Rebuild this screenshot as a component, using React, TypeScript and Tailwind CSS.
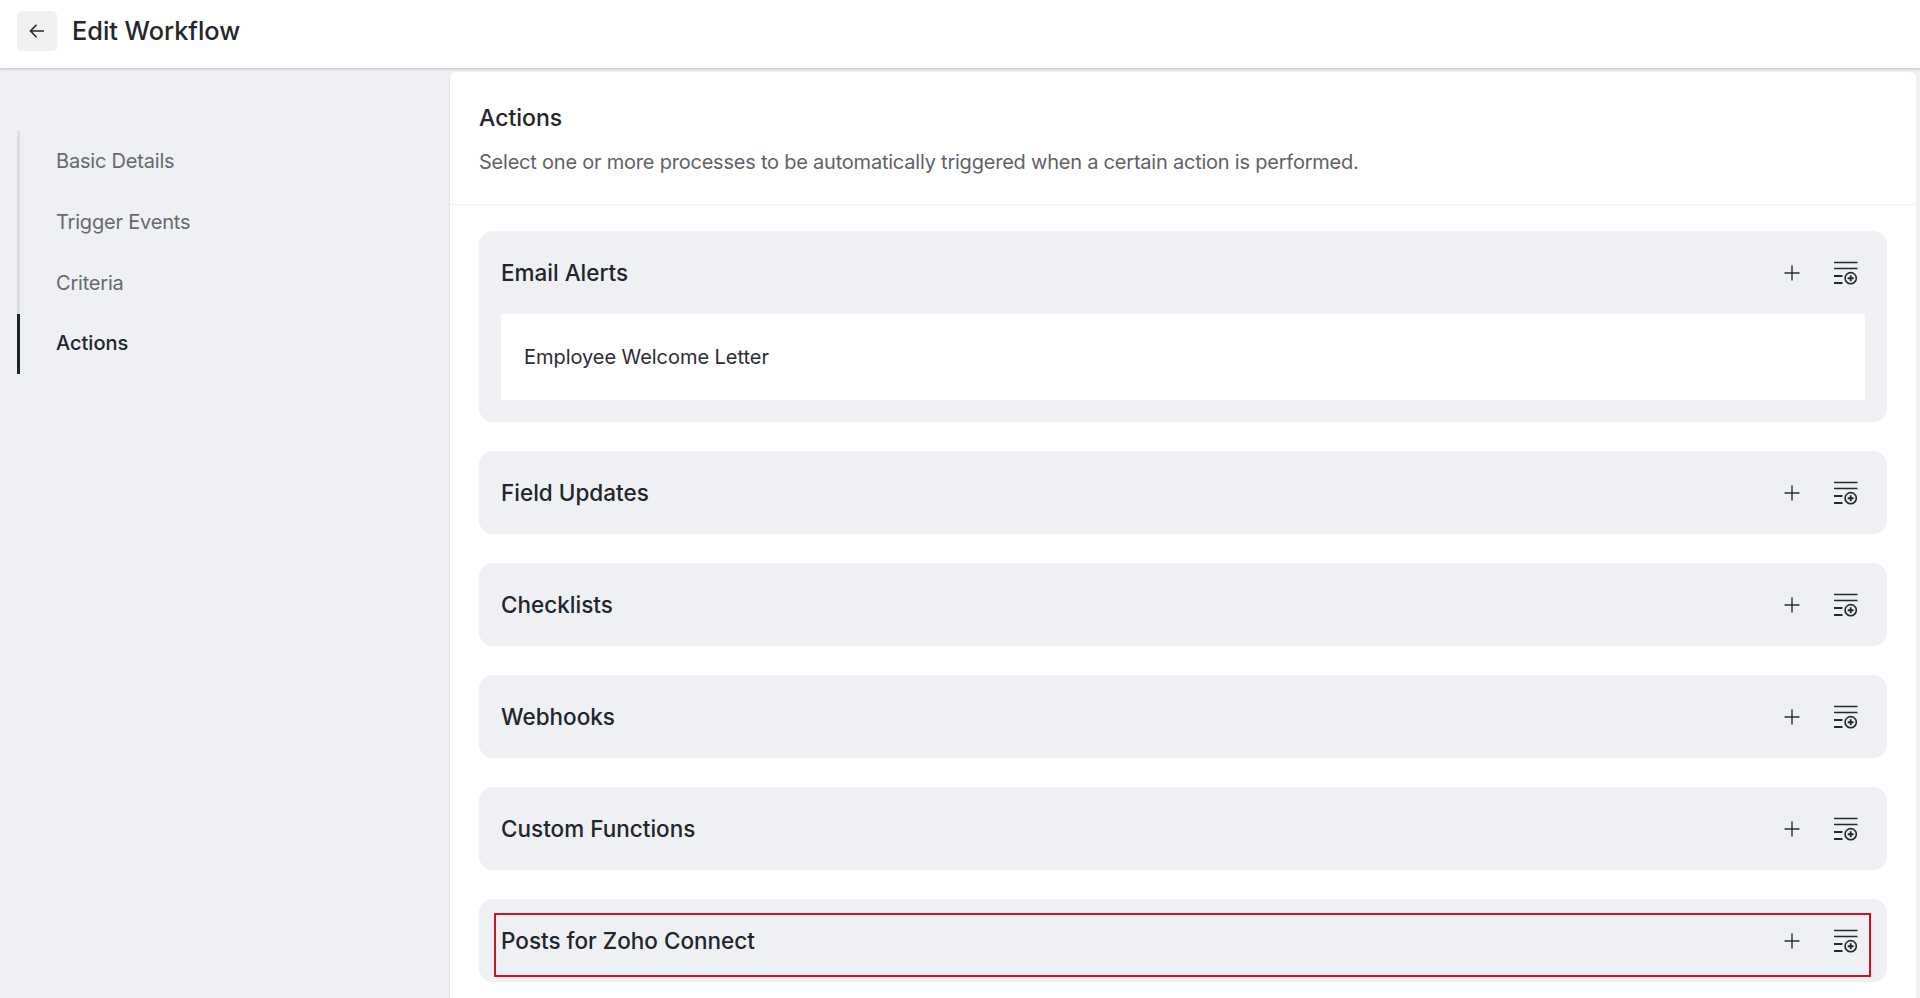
import React from 'react';

const font = { fontFamily: 'Inter, "Noto Sans", sans-serif' };

const ReorderIcon = () => (
  <svg width="24" height="24" viewBox="0 0 24 24" fill="none" stroke="#25282d" className="shrink-0">
    <path d="M0 1.5h23.5M0 7.5h23.5" strokeWidth="1.6" />
    <path d="M0 15h8.5M0 22h8.5" strokeWidth="1.8" />
    <circle cx="16.7" cy="17.2" r="5.6" strokeWidth="1.6" />
    <path d="M16.7 14.2v6M13.7 17.2h6" strokeWidth="1.9" />
  </svg>
);

const PlusIcon = () => (
  <svg width="16" height="16" viewBox="0 0 16 16" fill="none" stroke="#2a2d33" strokeWidth="1.4" className="shrink-0">
    <path d="M8 0.5v15M0.5 8h15" />
  </svg>
);

const ArrowLeft = () => (
  <svg width="16" height="16" viewBox="0 0 16 16" fill="none" stroke="#23262b" strokeWidth="1.6" className="shrink-0">
    <path d="M15 8H1.5M7.5 1.8 1.5 8l6 6.2" />
  </svg>
);

const CardHeader = ({ title }: { title: string }) => (
  <div className="flex h-[83px] items-center pl-[22px] pr-[29px]">
    <span className="flex-1 text-[22.5px] font-medium text-[#22252a]">{title}</span>
    <div className="mr-[34px]">
      <PlusIcon />
    </div>
    <ReorderIcon />
  </div>
);

const steps = ['Basic Details', 'Trigger Events', 'Criteria', 'Actions'];
const rows = ['Field Updates', 'Checklists', 'Webhooks', 'Custom Functions'];

export default function App() {
  return (
    <div className="flex h-[998px] flex-col overflow-hidden bg-[#eef0f4]" style={font}>
      {/* Top bar */}
      <header className="relative z-10 flex h-[68px] shrink-0 items-start bg-white pl-[17px] pt-[11px] shadow-[0_1px_3px_rgba(0,0,0,0.2)]">
        <button className="mr-[15px] flex h-[40px] w-[40px] items-center justify-center rounded-[5px] bg-[#f0f0f1]">
          <ArrowLeft />
        </button>
        <h1 className="text-[25.3px] font-medium leading-[40px] text-[#23262b]">Edit Workflow</h1>
      </header>

      <div className="flex min-h-0 flex-1">
        {/* Steps */}
        <nav className="w-[449px] shrink-0 pl-[17px] pt-[63px]">
          <ul className="border-l-[3px] border-[#dcdde0]">
            {steps.map((step) => {
              const active = step === 'Actions';
              return (
                <li
                  key={step}
                  className={
                    active
                      ? '-ml-[3px] flex h-[60px] items-center border-l-[3px] border-[#1f2227] pb-[2px] pl-[36px] text-[20px] font-medium text-[#22252a]'
                      : 'flex h-[61px] items-center pb-[2px] pl-[36px] text-[20px] tracking-[-0.2px] text-[#66696e]'
                  }
                >
                  {step}
                </li>
              );
            })}
          </ul>
        </nav>

        {/* Main panel */}
        <main className="mr-[4px] mt-[4px] flex-1 overflow-hidden rounded-t-[6px] border-l border-[#dfe6ee] bg-white">
          <div className="h-[133px] border-b border-[#f1f2f4] pl-[29px] pt-[29px]">
            <h2 className="text-[23px] font-medium leading-[34px] text-[#22252a]">Actions</h2>
            <p className="mt-[12px] text-[20px] leading-[30px] tracking-[-0.22px] text-[#5f6267]">
              Select one or more processes to be automatically triggered when a certain action is performed.
            </p>
          </div>

          <div className="flex flex-col gap-[29px] px-[29px] pb-[15px] pt-[26px]">
            <section className="rounded-[14px] bg-[#eef0f4] pb-[22px]">
              <CardHeader title="Email Alerts" />
              <div className="mx-[22px] flex h-[86px] items-center bg-white pl-[23px] text-[20px] tracking-[-0.05px] text-[#2a2d33]">
                Employee Welcome Letter
              </div>
            </section>

            {rows.map((row) => (
              <section key={row} className="rounded-[14px] bg-[#eef0f4]">
                <CardHeader title={row} />
              </section>
            ))}

            <section className="relative rounded-[14px] bg-[#eef0f4]">
              <CardHeader title="Posts for Zoho Connect" />
              {/* Red annotation box */}
              <div className="absolute bottom-[5px] left-[15px] right-[16px] top-[14px] border-2 border-[#d3121d]" />
            </section>
          </div>
        </main>
      </div>
    </div>
  );
}
